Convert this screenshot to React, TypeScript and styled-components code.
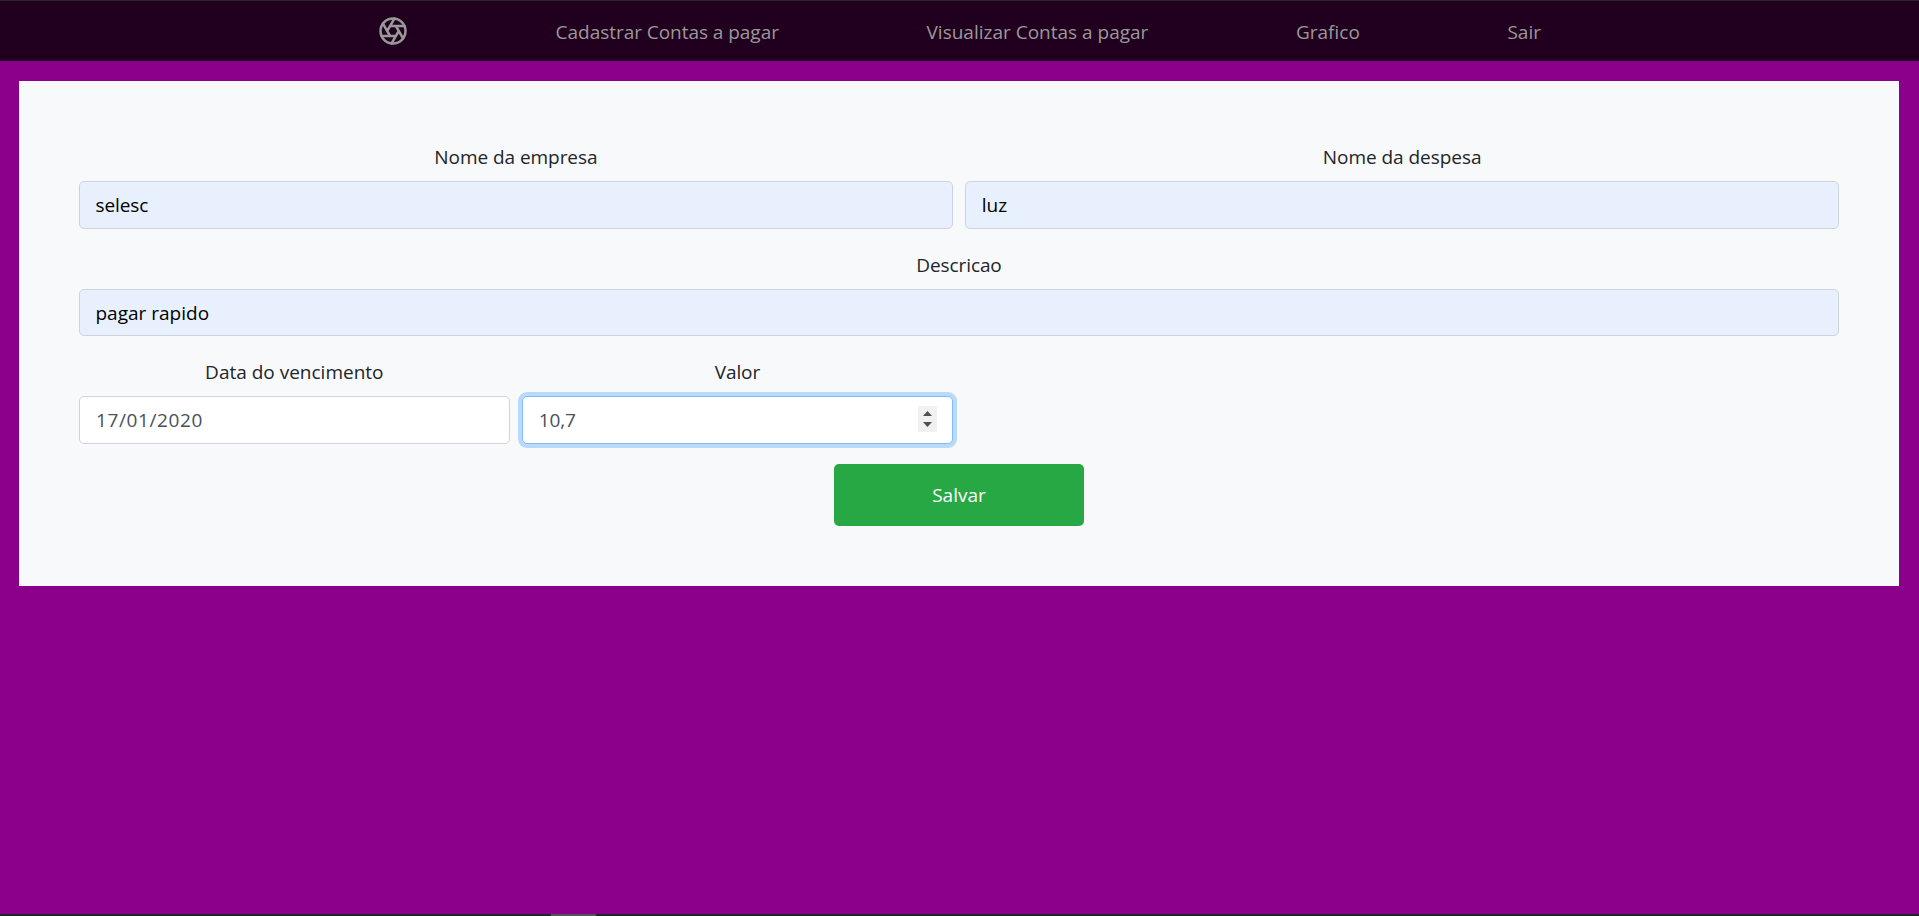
import React from "react";
import styled, { createGlobalStyle } from "styled-components";

const GlobalStyle = createGlobalStyle`
  *, *::before, *::after { box-sizing: border-box; }
  html, body { margin: 0; padding: 0; overflow: hidden; }
  body {
    font-family: "Segoe UI", "Open Sans", "Noto Sans", sans-serif;
    font-size: 19px;
    line-height: 30px;
    color: #212529;
    background: #8b008b;
  }
`;

const Page = styled.div`
  display: flex;
  flex-direction: column;
  height: 100vh;
  background: #8b008b;
`;

const NavBar = styled.header`
  height: 61px;
  flex: none;
  border-top: 1px solid #282828;
  background: #21001f;
`;

const NavContent = styled.nav`
  display: flex;
  align-items: center;
  justify-content: space-between;
  width: 1163px;
  height: 60px;
  margin-left: 378px;
`;

const Brand = styled.a`
  display: flex;
  color: #999;
`;

const NavLink = styled.a<{ $spacing: number }>`
  padding-top: 2px;
  color: #999;
  text-decoration: none;
  white-space: nowrap;
  letter-spacing: ${(p) => p.$spacing}px;
`;

const Card = styled.main`
  margin: 20px 20px 0 19px;
  padding: 60px;
  height: 505px;
  background: #f8f9fa;
`;

const Row = styled.div`
  display: grid;
  grid-template-columns: repeat(${(p: { $columns: number }) => p.$columns}, 1fr);
  gap: 12.5px;
`;

const Field = styled.div`
  min-width: 0;
  margin-bottom: 20px;
`;

const Label = styled.label<{ $spacing: number }>`
  display: block;
  margin-bottom: 10px;
  padding-top: 1px;
  height: 30px;
  text-align: center;
  letter-spacing: ${(p) => p.$spacing}px;
`;

const Control = styled.div<{ $filled?: boolean; $focused?: boolean }>`
  display: flex;
  align-items: center;
  height: 47.5px;
  padding: 0 15px;
  border: 1px solid ${(p) => (p.$focused ? "#80bdff" : "#ced4da")};
  border-radius: 5px;
  background: ${(p) => (p.$filled ? "#e8f0fe" : "#fff")};
  color: ${(p) => (p.$filled ? "#000" : "#495057")};
  box-shadow: ${(p) => (p.$focused ? "0 0 0 4px rgba(0, 123, 255, 0.25)" : "none")};
`;

const Input = styled.input<{ $spacing: number; $indent?: number }>`
  flex: 1;
  min-width: 0;
  height: 30px;
  padding: 1px 0 0 ${(p) => p.$indent ?? 0}px;
  border: 0;
  outline: 0;
  background: transparent;
  color: inherit;
  font: inherit;
  letter-spacing: ${(p) => p.$spacing}px;
`;

const Spinner = styled.span`
  display: flex;
  width: 19px;
  height: 26px;
  margin-bottom: 2px;
  background: #f1f1f1;
`;

const Actions = styled.div`
  display: flex;
  justify-content: center;
`;

const SaveButton = styled.button`
  width: 250px;
  height: 62.5px;
  padding: 1px 0 0;
  border: 0;
  border-radius: 5px;
  background: #28a745;
  color: #fff;
  font: inherit;
`;

const BottomBar = styled.footer`
  flex: none;
  height: 2px;
  margin-top: auto;
  padding-left: 551px;
  background: #222529;
`;

const BottomMark = styled.div`
  width: 45px;
  height: 2px;
  background: #555558;
`;

const Aperture = () => (
  <svg width="30" height="30" viewBox="0 0 24 24" fill="none" stroke="currentColor" strokeWidth="2" strokeLinecap="round" strokeLinejoin="round">
    <circle cx="12" cy="12" r="10" />
    <path d="M14.31 8l5.74 9.94M9.69 8h11.48M7.38 12l5.74-9.94M9.69 16L3.95 6.06M14.31 16H2.83M16.62 12l-5.74 9.94" />
  </svg>
);

const links = [
  { text: "Cadastrar Contas a pagar", spacing: -0.04 },
  { text: "Visualizar Contas a pagar", spacing: 0 },
  { text: "Grafico", spacing: 0 },
  { text: "Sair", spacing: 0 },
];

export default function App() {
  return (
    <Page>
      <GlobalStyle />
      <NavBar>
        <NavContent>
          <Brand>
            <Aperture />
          </Brand>
          {links.map((l) => (
            <NavLink key={l.text} $spacing={l.spacing}>
              {l.text}
            </NavLink>
          ))}
        </NavContent>
      </NavBar>
      <Card>
        <Row $columns={2}>
          <Field>
            <Label $spacing={-0.05}>Nome da empresa</Label>
            <Control $filled>
              <Input $spacing={-0.1} $indent={0.5} defaultValue="selesc" />
            </Control>
          </Field>
          <Field>
            <Label $spacing={-0.05}>Nome da despesa</Label>
            <Control $filled>
              <Input $spacing={0} $indent={0.5} defaultValue="luz" />
            </Control>
          </Field>
        </Row>
        <Field>
          <Label $spacing={-0.1}>Descricao</Label>
          <Control $filled>
            <Input $spacing={0} $indent={0.5} defaultValue="pagar rapido" />
          </Control>
        </Field>
        <Row $columns={2}>
          <Row $columns={2}>
            <Field>
              <Label $spacing={0}>Data do vencimento</Label>
              <Control>
                <Input $spacing={0.6} $indent={1} defaultValue="17/01/2020" />
              </Control>
            </Field>
            <Field>
              <Label $spacing={-0.1}>Valor</Label>
              <Control $focused>
                <Input $spacing={-0.1} $indent={0.5} defaultValue="10,7" />
                <Spinner>
                  <svg width="19" height="26" viewBox="0 0 19 26" fill="#505050">
                    <path d="M5 10L9.5 5L14 10ZM5 16H14L9.5 21Z" />
                  </svg>
                </Spinner>
              </Control>
            </Field>
          </Row>
        </Row>
        <Actions>
          <SaveButton>Salvar</SaveButton>
        </Actions>
      </Card>
      <BottomBar>
        <BottomMark />
      </BottomBar>
    </Page>
  );
}
